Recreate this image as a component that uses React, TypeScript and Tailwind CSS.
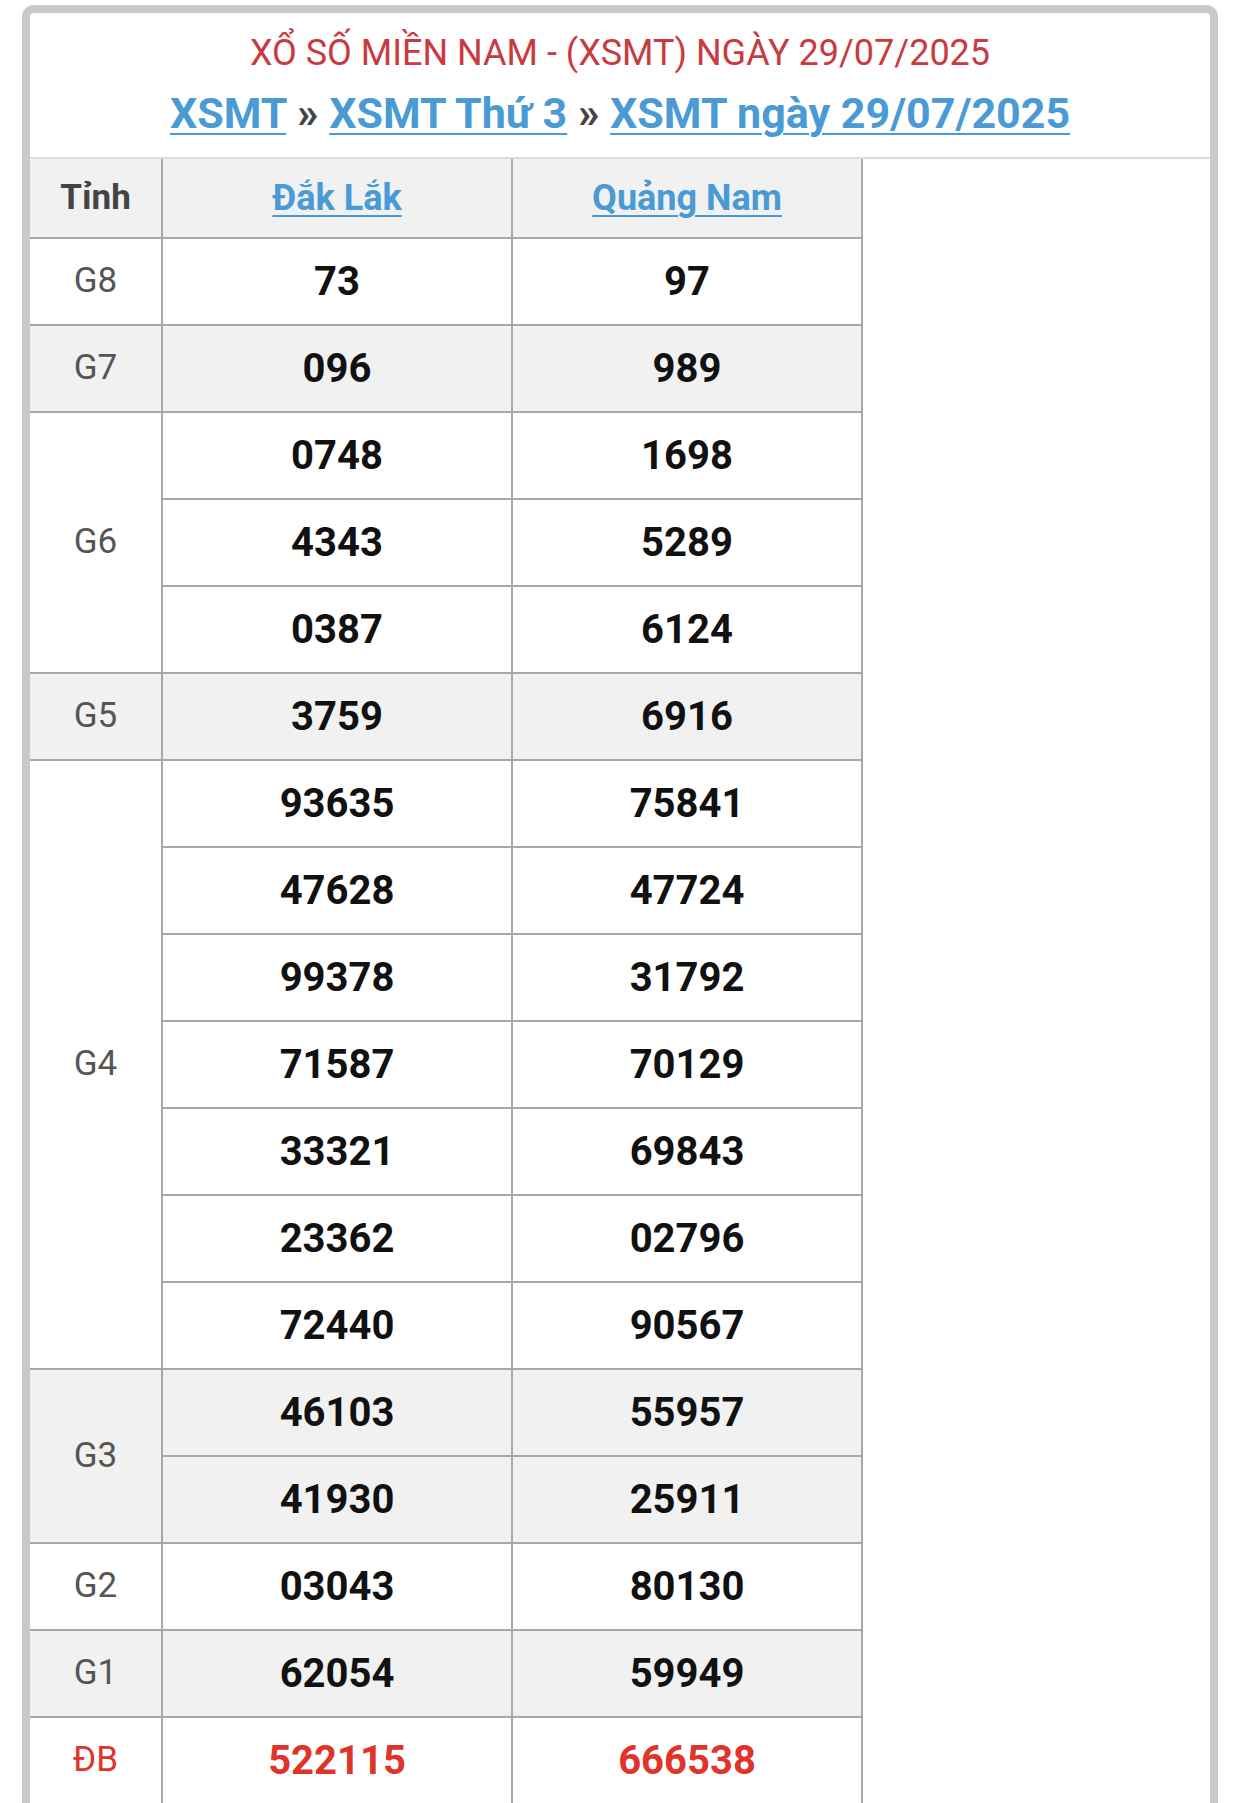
import React from "react";

type Group = { label: string; a: string[]; b: string[]; gray: boolean; special?: boolean };

const groups: Group[] = [
  { label: "G8", a: ["73"], b: ["97"], gray: false },
  { label: "G7", a: ["096"], b: ["989"], gray: true },
  { label: "G6", a: ["0748", "4343", "0387"], b: ["1698", "5289", "6124"], gray: false },
  { label: "G5", a: ["3759"], b: ["6916"], gray: true },
  {
    label: "G4",
    a: ["93635", "47628", "99378", "71587", "33321", "23362", "72440"],
    b: ["75841", "47724", "31792", "70129", "69843", "02796", "90567"],
    gray: false,
  },
  { label: "G3", a: ["46103", "41930"], b: ["55957", "25911"], gray: true },
  { label: "G2", a: ["03043"], b: ["80130"], gray: false },
  { label: "G1", a: ["62054"], b: ["59949"], gray: true },
  { label: "ĐB", a: ["522115"], b: ["666538"], gray: false, special: true },
];

export default function App() {
  return (
    <div
      className="min-h-[1803px] bg-white pt-[5px]"
      style={{ fontFamily: "Roboto, 'Noto Sans', 'Liberation Sans', sans-serif" }}
    >
      <div className="ml-[22px] w-[1196px] rounded-t-[12px] border-[8px] border-b-0 border-[#c9c9c9] bg-white">
        {/* Title */}
        <div className="flex h-[146px] flex-col items-center border-b-2 border-[#dcdcdc] pt-[20px]">
          <div className="text-[36px] leading-[40px] text-[#c93a40]">
            XỔ SỐ MIỀN NAM - (XSMT) NGÀY 29/07/2025
          </div>
          <div className="mt-[16px] text-[43px] font-bold leading-[48px] text-[#4a9ad5]">
            <a className="underline decoration-2 underline-offset-[5px]" href="#">
              XSMT
            </a>
            <span className="text-[#444]"> » </span>
            <a className="underline decoration-2 underline-offset-[5px]" href="#">
              XSMT Thứ 3
            </a>
            <span className="text-[#444]"> » </span>
            <a className="underline decoration-2 underline-offset-[5px]" href="#">
              XSMT ngày 29/07/2025
            </a>
          </div>
        </div>

        {/* Table */}
        <div className="w-[833px]">
          {/* Header */}
          <div className="flex h-[80px] border-b-2 border-[#a8a8a8] bg-[#f1f1f1]">
            <div className="flex w-[133px] items-center justify-center border-r-2 border-[#a8a8a8] text-[35px] font-bold text-[#444]">
              Tỉnh
            </div>
            <div className="flex w-[350px] items-center justify-center border-r-2 border-[#a8a8a8]">
              <a
                href="#"
                className="text-[36px] font-bold text-[#4a9ad5] underline decoration-2 underline-offset-[5px]"
              >
                Đắk Lắk
              </a>
            </div>
            <div className="flex w-[350px] items-center justify-center border-r-2 border-[#a8a8a8]">
              <a
                href="#"
                className="text-[36px] font-bold text-[#4a9ad5] underline decoration-2 underline-offset-[5px]"
              >
                Quảng Nam
              </a>
            </div>
          </div>

          {groups.map((g) => (
            <div key={g.label} className={`flex ${g.gray ? "bg-[#f1f1f1]" : "bg-white"}`}>
              <div
                className={`flex w-[133px] items-center justify-center border-b-2 border-r-2 border-[#a8a8a8] text-[35px] ${
                  g.special ? "text-[#e0342b]" : "text-[#555]"
                }`}
              >
                {g.label}
              </div>
              <div className="flex flex-col">
                {g.a.map((v, i) => (
                  <div key={i} className="flex h-[87px] border-b-2 border-[#a8a8a8]">
                    <div
                      className={`flex w-[350px] items-center justify-center border-r-2 border-[#a8a8a8] text-[40px] font-bold ${
                        g.special ? "text-[#e0342b]" : "text-[#111]"
                      }`}
                    >
                      {v}
                    </div>
                    <div
                      className={`flex w-[350px] items-center justify-center border-r-2 border-[#a8a8a8] text-[40px] font-bold ${
                        g.special ? "text-[#e0342b]" : "text-[#111]"
                      }`}
                    >
                      {g.b[i]}
                    </div>
                  </div>
                ))}
              </div>
            </div>
          ))}
        </div>
      </div>
    </div>
  );
}
